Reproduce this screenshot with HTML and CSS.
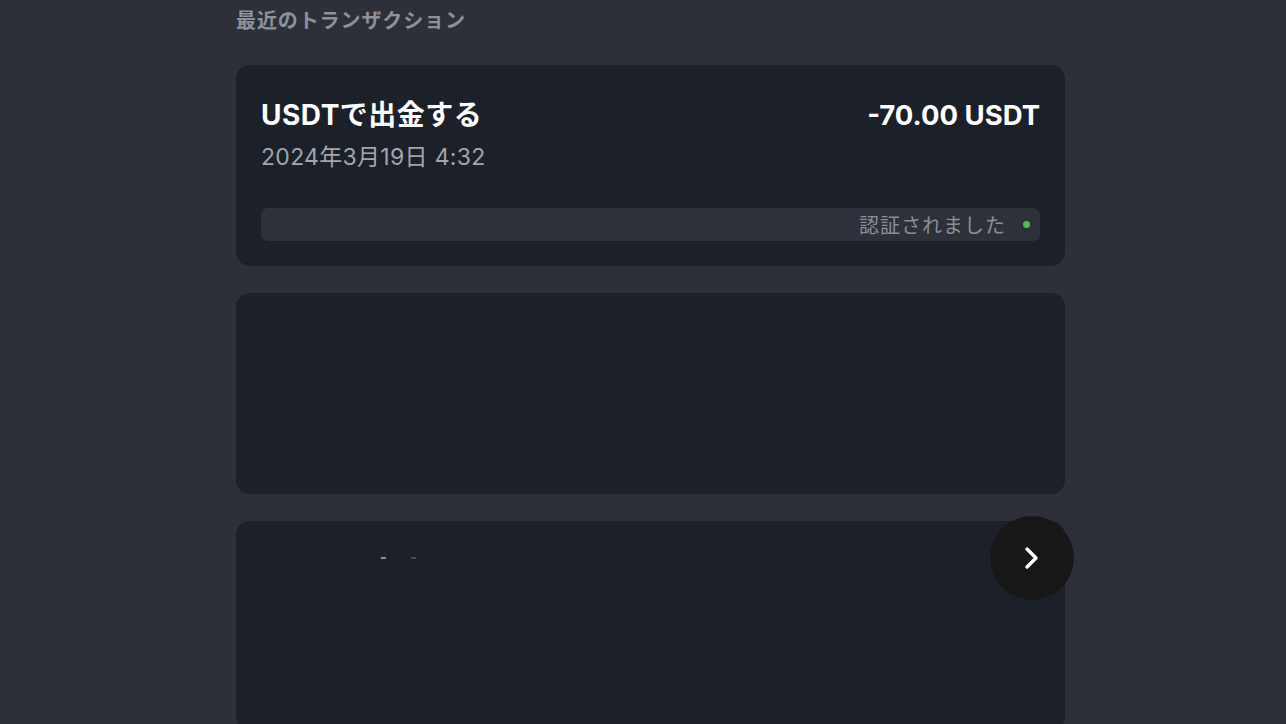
FILE: index.html
```html
<!DOCTYPE html>
<html lang="ja">
<head>
<meta charset="utf-8">
<link rel="stylesheet" href="styles.css">
</head>
<body>
<main class="page">
  <h2 class="section-title">最近のトランザクション</h2>
  <div class="list">
    <div class="card">
      <div class="card-head">
        <div class="info">
          <div class="title">USDTで出金する</div>
          <div class="date">2024年3月19日 4:32</div>
        </div>
        <div class="amount">-70.00 USDT</div>
      </div>
      <div class="status">
        <span class="status-text">認証されました</span>
        <span class="dot"></span>
      </div>
    </div>
    <div class="card"></div>
    <div class="card card-last">
      <div class="specks"><span class="speck"></span><span class="speck dim"></span></div>
      <button class="next" aria-label="次へ">
        <svg width="22" height="26" viewBox="0 0 22 26"><path d="M6 4 L15 13 L6 22" fill="none" stroke="#fff" stroke-width="3.4" stroke-linecap="round" stroke-linejoin="round"/></svg>
      </button>
    </div>
  </div>
</main>
</body>
</html>
```
FILE: styles.css
```css
html, body {
  margin: 0;
  padding: 0;
  background: #2d3038;
  height: 100%;
  overflow: hidden;
}
body {
  font-family: Inter, "Noto Sans CJK JP", sans-serif;
}
.page {
  width: 829px;
  margin-left: 236px;
  padding-top: 7px;
}
.section-title {
  margin: 0;
  font-size: 20px;
  line-height: 28px;
  font-weight: 700;
  color: #8c929a;
  letter-spacing: 0.9px;
}
.list {
  margin-top: 30px;
  display: flex;
  flex-direction: column;
  gap: 27px;
}
.card {
  background: #1c2028;
  border-radius: 14px;
  height: 201px;
  box-sizing: border-box;
  padding: 32px 25px 25px;
  position: relative;
}
.card-head {
  display: flex;
  justify-content: space-between;
  align-items: flex-start;
}
.title {
  font-size: 28px;
  line-height: 36px;
  font-weight: 700;
  color: #ffffff;
  letter-spacing: 0.5px;
}
.date {
  margin-top: 9px;
  font-size: 23px;
  line-height: 30px;
  color: #a1a6ad;
  letter-spacing: 0.3px;
}
.amount {
  font-size: 27.5px;
  line-height: 36px;
  font-weight: 700;
  color: #ffffff;
}
.status {
  margin-top: 36px;
  height: 33px;
  background: #2e3139;
  border-radius: 7px;
  display: flex;
  justify-content: flex-end;
  align-items: center;
  padding-right: 10px;
  gap: 17px;
}
.status-text {
  font-size: 20px;
  letter-spacing: 1px;
  color: #8a8f97;
}
.dot {
  width: 7px;
  height: 7px;
  border-radius: 50%;
  background: #4cbc55;
}
.card-last {
  height: 210px;
}
.specks {
  display: flex;
  gap: 25px;
  margin-left: 120px;
  margin-top: 4px;
}
.speck {
  width: 5px;
  height: 2px;
  background: #8a8f97;
}
.speck.dim {
  background: #4a4f57;
}
.next {
  position: absolute;
  right: -9px;
  top: -5px;
  width: 84px;
  height: 84px;
  border-radius: 50%;
  border: none;
  background: #171717;
  display: flex;
  align-items: center;
  justify-content: center;
  padding: 0;
}
```
